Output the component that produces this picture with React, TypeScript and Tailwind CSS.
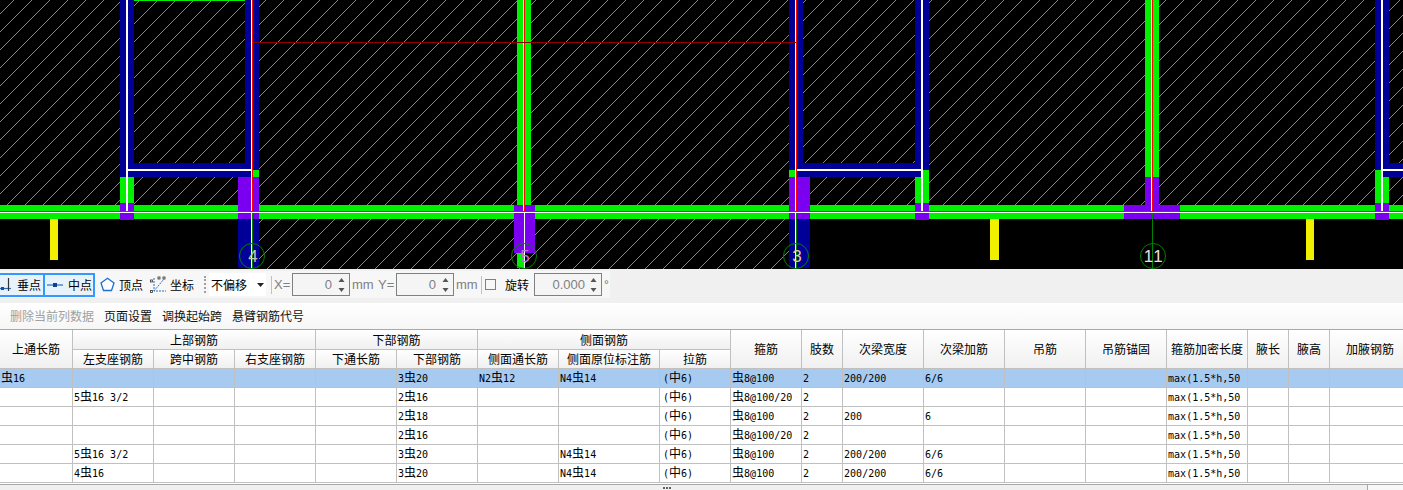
import React from "react";

const CJK = "font-['Noto_Sans_CJK_SC','Liberation_Sans',sans-serif]";
const BLUE = "#000099";
const GREEN = "#00f000";
const PURPLE = "#7b00f0";

type R = [number, number, number, number, string];
const rects: R[] = [
  // main horizontal beam
  [0, 205, 1403, 14, GREEN],
  // top edge
  [134, 0, 111, 1, GREEN],
  // bay 1
  [120, 0, 14, 170, BLUE],
  [120, 170, 14, 33, GREEN],
  [120, 203, 14, 17, PURPLE],
  [245, 0, 14, 170, BLUE],
  [120, 163, 139, 14, BLUE],
  [253, 170, 6, 7, GREEN],
  [238, 177, 21, 42, PURPLE],
  [238, 219, 21, 49, BLUE],
  // axis 5
  [517, 0, 14, 205, GREEN],
  [514, 205, 21, 48, PURPLE],
  [517, 253, 7, 15, GREEN],
  // bay 2
  [789, 0, 14, 170, BLUE],
  [915, 0, 14, 170, BLUE],
  [789, 163, 140, 14, BLUE],
  [789, 170, 7, 7, GREEN],
  [789, 177, 21, 42, PURPLE],
  [789, 219, 21, 49, BLUE],
  [915, 177, 14, 26, GREEN],
  [923, 170, 6, 7, GREEN],
  [915, 203, 14, 17, PURPLE],
  // axis 11
  [1145, 0, 14, 177, GREEN],
  [1145, 177, 14, 28, PURPLE],
  [1124, 205, 56, 14, PURPLE],
  // right edge
  [1375, 0, 14, 170, BLUE],
  [1375, 163, 28, 14, BLUE],
  [1375, 170, 8, 33, GREEN],
  [1383, 177, 6, 26, GREEN],
  [1375, 203, 14, 17, PURPLE],
  // yellow posts
  [50, 219, 8, 41, "#f0f000"],
  [990, 219, 9, 41, "#f0f000"],
  [1306, 219, 8, 41, "#f0f000"],
  // white centre lines
  [0, 212, 1403, 1, "#ffffff"],
  [126, 0, 2, 211, "#ffffff"],
  [128, 169, 124, 2, "#ffffff"],
  [251, 0, 1, 212, "#ffffff"],
  [252, 0, 1, 212, "#ff0000"],
  [796, 169, 127, 2, "#ffffff"],
  [921, 0, 2, 211, "#ffffff"],
  [795, 0, 1, 212, "#ffffff"],
  [796, 0, 1, 212, "#ff0000"],
  [523, 0, 1, 212, "#ffffff"],
  [524, 0, 1, 212, "#ff0000"],
  [1152, 0, 1, 212, "#ff0000"],
  [1151, 0, 1, 212, "#ffffff"],
  [1381, 0, 2, 211, "#ffffff"],
  [1383, 169, 20, 2, "#ffffff"],
  // red long lines
  [0, 211, 1403, 1, "#ff0000"],
  [253, 42, 543, 1, "#900000"],
  // axis lines below beam
  [252, 213, 1, 55, "#008000"],
  [251, 213, 1, 55, "#ffffff"],
  [524, 213, 1, 55, "#ffffff"],
  [796, 213, 1, 55, "#008000"],
  [795, 213, 1, 55, "#ffffff"],
  [1152, 213, 1, 55, "#008000"],
];

const axes: [number, string, string][] = [
  [253, "4", "#c8c8b0"],
  [525, "5", "#c070e0"],
  [797, "3", "#e0d080"],
  [1154, "11", "#e0e0e0"],
];

function Canvas() {
  return (
    <svg width="1403" height="269" className="block shrink-0 bg-black">
      <defs>
        <pattern
          id="h"
          width="18"
          height="18"
          patternUnits="userSpaceOnUse"
          patternTransform="translate(14 0)"
        >
          <line x1="-1" y1="19" x2="19" y2="-1" stroke="#c0c0c0" strokeWidth="0.7" />
          <line x1="-1" y1="1" x2="1" y2="-1" stroke="#c0c0c0" strokeWidth="0.7" />
          <line x1="17" y1="19" x2="19" y2="17" stroke="#c0c0c0" strokeWidth="0.7" />
        </pattern>
      </defs>
      <rect x="0" y="0" width="1403" height="205" fill="url(#h)" />
      <rect x="259" y="219" width="530" height="50" fill="url(#h)" />
      <g shapeRendering="crispEdges">
        {rects.map(([x, y, w, h, c], i) => (
          <rect key={i} x={x} y={y} width={w} height={h} fill={c} />
        ))}
      </g>
      {axes.map(([x, t, c]) => (
        <g key={t}>
          <circle cx={x - 1} cy={256} r={12.5} fill="none" stroke="#008000" strokeWidth="1" />
          <text
            x={x}
            y={262}
            textAnchor="middle"
            fontSize="17"
            fontFamily="'Liberation Sans', sans-serif"
            letterSpacing={t === "11" ? 1.5 : 0}
            fill={c}
          >
            {t}
          </text>
        </g>
      ))}
    </svg>
  );
}

function Chevrons() {
  return (
    <svg width="9" height="16" viewBox="0 0 9 16" className="shrink-0">
      <path d="M4.5 1 L7.5 5 L1.5 5 Z" fill="#555" />
      <path d="M4.5 15 L7.5 11 L1.5 11 Z" fill="#555" />
    </svg>
  );
}

function Spin({ w, value, pr }: { w: string; value: string; pr: string }) {
  return (
    <div className={`${w} ml-[3px] flex h-[23px] items-center justify-between border border-[#808080] bg-[#f5f5f5] pr-[3px] text-[13px] text-[#808080]`}>
      <span className={`flex-1 text-right ${pr} font-['Liberation_Sans',sans-serif]`}>{value}</span>
      <Chevrons />
    </div>
  );
}

const latinGray = "text-[13px] text-[#808080] font-['Liberation_Sans',sans-serif] whitespace-nowrap";

function Toolbar() {
  return (
    <div className={`flex h-[34px] shrink-0 items-start whitespace-nowrap bg-[#f0f0f0] pt-[2px] text-[12px] text-black ${CJK}`}>
      <div className="flex h-[27px] w-[610px] items-center bg-[#f7f7f7] pl-0">
        <div className="-ml-[2px] flex h-[24px] w-[47px] shrink-0 items-center justify-end gap-[4px] border-2 border-[#3399ff] bg-[#e8f2fb] pr-[2px]">
          <svg width="14" height="16" viewBox="0 0 14 16" className="shrink-0">
            <path d="M0 11.5 H12" stroke="#2a6fc0" strokeWidth="1.2" />
            <path d="M9.5 1 V14" stroke="#333" strokeWidth="1.2" />
            <rect x="2" y="10" width="3" height="3" fill="#1a4fa0" />
          </svg>
          <span>垂点</span>
        </div>
        <div className="flex h-[24px] w-[50px] shrink-0 items-center justify-end gap-[5px] border-2 border-l-0 border-[#3399ff] bg-[#e8f2fb] pr-[1px]">
          <svg width="16" height="8" viewBox="0 0 16 8" className="shrink-0">
            <path d="M0 4 H16" stroke="#2a6fc0" strokeWidth="1.2" />
            <rect x="6" y="2" width="4" height="4" fill="#12408a" />
          </svg>
          <span>中点</span>
        </div>
        <div className="ml-[5px] flex w-[43px] shrink-0 items-center gap-[4px]">
          <svg width="15" height="15" viewBox="0 0 15 15" className="shrink-0">
            <path d="M7.5 1.2 L14 6 L11.5 13.5 H3.5 L1 6 Z" fill="#fff" stroke="#1f6fd0" strokeWidth="1.3" />
          </svg>
          <span>顶点</span>
        </div>
        <div className="ml-[7px] flex w-[46px] shrink-0 items-center gap-[3px]">
          <svg width="17" height="18" viewBox="0 0 17 18" className="shrink-0">
            <path d="M4 2 V15 H16" stroke="#2a6fc0" strokeWidth="1" fill="none" strokeDasharray="2 1" />
            <path d="M4 15 L14 3" stroke="#2a6fc0" strokeWidth="1" fill="none" strokeDasharray="2 1" />
            <rect x="0.5" y="4" width="2" height="2" fill="none" stroke="#333" strokeWidth="0.8" />
            <rect x="0.5" y="14.5" width="2" height="2" fill="none" stroke="#333" strokeWidth="0.8" />
            <rect x="13" y="1" width="2" height="2" fill="none" stroke="#333" strokeWidth="0.8" />
            <rect x="8" y="1" width="2" height="2" fill="none" stroke="#333" strokeWidth="0.8" />
          </svg>
          <span>坐标</span>
        </div>
        <div className="ml-[8px] h-[17px] w-[2px] shrink-0 border-l-2 border-dotted border-[#a0a0a0]" />
        <div className="ml-[3px] flex h-[23px] w-[57px] shrink-0 items-center justify-between bg-white pl-[2px] pr-[2px] text-[12px]">
          <span>不偏移</span>
          <svg width="7" height="4" viewBox="0 0 7 4"><path d="M0 0 H7 L3.5 4 Z" fill="#222" /></svg>
        </div>
        <div className="ml-[5px] h-[18px] w-px shrink-0 bg-[#c0c0c0]" />
        <span className={`ml-[2px] w-[15px] shrink-0 ${latinGray}`}>X=</span>
        <Spin w="w-[58px] shrink-0" value="0" pr="pr-[5px]" />
        <span className={`ml-[2px] w-[26px] shrink-0 ${latinGray}`}>mm</span>
        <span className={`w-[15px] shrink-0 ${latinGray}`}>Y=</span>
        <Spin w="w-[58px] shrink-0" value="0" pr="pr-[5px]" />
        <span className={`ml-[2px] w-[25px] shrink-0 ${latinGray}`}>mm</span>
        <div className="h-[18px] w-px shrink-0 bg-[#c0c0c0]" />
        <div className="ml-[3px] h-[11px] w-[11px] shrink-0 border border-[#808080] bg-[#f7f7f7]" />
        <span className="ml-[9px] w-[26px] shrink-0">旋转</span>
        <Spin w="w-[68px] shrink-0" value="0.000" pr="pr-[4px]" />
        <span className="ml-[2px] text-[12px] text-[#707070] font-['Liberation_Sans',sans-serif]">°</span>
      </div>
    </div>
  );
}

function Actions() {
  return (
    <div className={`flex h-[26px] shrink-0 items-center gap-[10px] whitespace-nowrap bg-gradient-to-b from-[#ffffff] to-[#f6f6f6] pl-[10px] text-[12px] text-[#111] ${CJK}`}>
      <span className="text-[#a0a0a0]">删除当前列数据</span>
      <span>页面设置</span>
      <span>调换起始跨</span>
      <span>悬臂钢筋代号</span>
    </div>
  );
}

const widths = [73, 81, 81, 81, 81, 81, 81, 101, 71, 71, 41, 81, 81, 81, 81, 81, 41, 41, 81];
const M = "max(1.5*h,50";
const data: string[][] = [
  ["虫16", "", "", "", "", "3虫20", "N2虫12", "N4虫14", "(中6)", "虫8@100", "2", "200/200", "6/6", "", "", M, "", "", ""],
  ["", "5虫16 3/2", "", "", "", "2虫16", "", "", "(中6)", "虫8@100/20", "2", "", "", "", "", M, "", "", ""],
  ["", "", "", "", "", "2虫18", "", "", "(中6)", "虫8@100", "2", "200", "6", "", "", M, "", "", ""],
  ["", "", "", "", "", "2虫16", "", "", "(中6)", "虫8@100/20", "2", "", "", "", "", M, "", "", ""],
  ["", "5虫16 3/2", "", "", "", "3虫20", "", "N4虫14", "(中6)", "虫8@100", "2", "200/200", "6/6", "", "", M, "", "", ""],
  ["", "4虫16", "", "", "", "3虫20", "", "N4虫14", "(中6)", "虫8@100", "2", "200/200", "6/6", "", "", M, "", "", ""],
];

function CellText({ t, col }: { t: string; col: number }) {
  const parts = t.split(/([虫中])/);
  return (
    <div className={`h-[18px] whitespace-pre font-['DejaVu_Sans_Mono',monospace] text-[10px] leading-[20px] ${col === 8 ? "pl-[3px]" : "pl-px"}`}>
      {parts.map((p, i) =>
        p === "虫" || p === "中" ? (
          <span key={i} className={`text-[12px] leading-none ${CJK}`}>{p}</span>
        ) : (
          <span key={i}>{p}</span>
        ),
      )}
    </div>
  );
}

const th =
  "border-r border-b border-[#c0c0c0] bg-gradient-to-b from-white to-[#f0f0f0] p-0 text-center text-[12px] font-normal leading-[18px] text-black";

function Sheet() {
  const after = ["箍筋", "肢数", "次梁宽度", "次梁加筋", "吊筋", "吊筋锚固", "箍筋加密长度", "腋长", "腋高", "加腋钢筋"];
  return (
    <div className="h-[155px] shrink-0 overflow-hidden border-t border-[#a8a8a8] bg-white">
      <table className={`w-[1411px] table-fixed border-separate border-spacing-0 ${CJK}`}>
        <colgroup>
          {widths.map((w, i) => (
            <col key={i} style={{ width: w }} />
          ))}
        </colgroup>
        <thead>
          <tr className="h-[20px]">
            <th rowSpan={2} className={th}>上通长筋</th>
            <th colSpan={3} className={th}>上部钢筋</th>
            <th colSpan={2} className={th}>下部钢筋</th>
            <th colSpan={3} className={th}>侧面钢筋</th>
            {after.map((c) => (
              <th key={c} rowSpan={2} className={th}>{c}</th>
            ))}
          </tr>
          <tr className="h-[19px]">
            {["左支座钢筋", "跨中钢筋", "右支座钢筋", "下通长筋", "下部钢筋", "侧面通长筋", "侧面原位标注筋", "拉筋"].map((c) => (
              <th key={c} className={th}>{c}</th>
            ))}
          </tr>
        </thead>
        <tbody>
          {data.map((row, r) => (
            <tr key={r} className={`h-[19px] ${r === 0 ? "bg-[#a6caf0]" : "bg-white"}`}>
              {row.map((c, i) => (
                <td key={i} className="border-r border-b border-[#c0c0c0] p-0 text-black">
                  <CellText t={c} col={i} />
                </td>
              ))}
            </tr>
          ))}
        </tbody>
      </table>
    </div>
  );
}

function Scrollbar() {
  return (
    <div className="flex h-[6px] shrink-0 border-t border-[#a8a8a8] bg-[#f0f0f0]">
      <div className="relative h-full w-[1368px] border-r border-[#a8a8a8] bg-[#f0f0f0]">
        <div className="absolute left-[663px] top-[2px] h-[2px] w-[8px] border-t-2 border-dotted border-[#606060]" />
      </div>
      <div className="flex-1 bg-[#f8f8f8]" />
    </div>
  );
}

export default function App() {
  return (
    <div className="flex h-[490px] w-[1403px] flex-col overflow-hidden bg-[#f0f0f0]">
      <Canvas />
      <Toolbar />
      <Actions />
      <Sheet />
      <Scrollbar />
    </div>
  );
}
